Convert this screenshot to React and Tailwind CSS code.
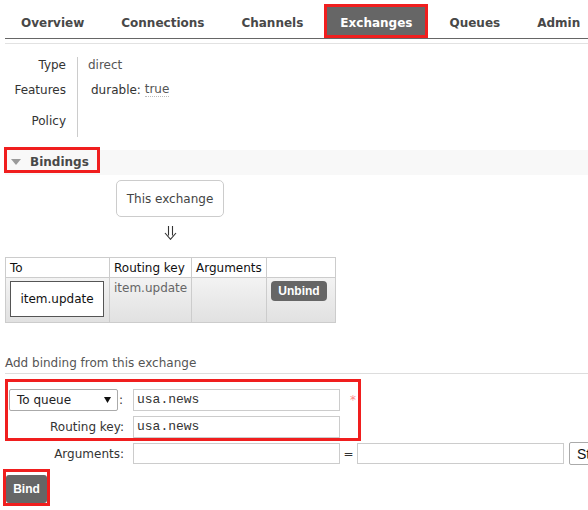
export default function App() {
  const tabs = ["Overview", "Connections", "Channels", "Exchanges", "Queues", "Admin"];
  return (
    <div className="w-[588px] h-[510px] overflow-hidden bg-white font-['DejaVu_Sans',Verdana,sans-serif] text-[12px] leading-[14px] text-[#484848]">
      {/* nav */}
      <div className="pt-[4px] pl-[5px]">
        <div className="flex gap-[5px] border-b border-[#666]">
          {tabs.map((t) =>
            t === "Exchanges" ? (
              <div
                key={t}
                className="h-[34px] shrink-0 flex items-center pt-[3px] px-[13px] border-[3px] border-[#f01e1e] bg-[#666] text-white font-bold"
              >
                {t}
              </div>
            ) : (
              <div key={t} className="h-[34px] shrink-0 flex items-center pt-[3px] px-4 font-bold text-[#484848]">
                {t}
              </div>
            )
          )}
        </div>
      </div>

      <div className="pl-[5px] mt-[4px]">
        <div className="border-t border-[#e2e2e2]">
          {/* details */}
          <div className="grid grid-cols-[61px_1fr] pt-[13px]">
            <div className="h-[15px] flex items-center justify-end text-[#333]">Type</div>
            <div className="h-[15px] ml-[11px] border-l border-[#ccc] pl-[10px] flex items-center text-[#555]">direct</div>
            <div className="h-[32px] pt-[4px] flex items-center justify-end text-[#333]">Features</div>
            <div className="h-[32px] pt-[4px] ml-[11px] border-l border-[#ccc] pl-[13px] flex items-center text-[#333]">
              durable:&nbsp;<span className="text-[#555] border-b border-dotted border-[#bbb] leading-[13px]">true</span>
            </div>
            <div className="h-[33px] pt-[1px] flex items-center justify-end text-[#333]">Policy</div>
            <div className="h-[33px] ml-[11px] border-l border-[#ccc]"></div>
          </div>

          {/* bindings header */}
          <div className="mt-[13px] h-[25px] bg-[#f8f8f8] flex items-start">
            <div className="-mt-[3px] -ml-[1px] h-[26px] w-[96px] border-[3px] border-[#f01e1e] flex items-center pt-[4px] pl-[4px]">
              <svg width="10" height="6" viewBox="0 0 10 6" className="shrink-0">
                <path d="M0 0 L10 0 L5 6 Z" fill="#9a9a9a" />
              </svg>
              <span className="ml-[9px] font-bold text-[#484848]">Bindings</span>
            </div>
          </div>

          {/* this exchange */}
          <div className="mt-[5px] ml-[111px] w-[108px] h-[37px] border border-[#ccc] rounded-[5px] flex items-center justify-center text-[#444]">
            This exchange
          </div>
          <div className="mt-[9px] ml-[111px] w-[108px] h-[14px] flex justify-center">
            <svg width="13" height="14" viewBox="0 0 13 14" fill="none" stroke="#333" strokeWidth="1.1">
              <path d="M4.5 0 V9.5 M8.5 0 V9.5 M1 7 L6.5 13.3 L12 7" />
            </svg>
          </div>

          {/* table */}
          <div className="mt-[17px] grid grid-cols-[104px_82px_75px_69px] w-[331px] border-r border-b border-[#ccc]">
            {["To", "Routing key", "Arguments", ""].map((h, i) => (
              <div key={i} className="h-[20px] border-t border-l border-[#ccc] pl-[4px] flex items-center text-[#111]">
                {h}
              </div>
            ))}
            <div className="h-[45px] border-t border-l border-[#ccc] bg-linear-to-b from-[#f3f3f3] to-[#e1e1e1] pt-[3px] pl-[4px]">
              <div className="w-[94px] h-[36px] border border-[#555] bg-white flex items-center justify-center text-[#111]">
                item.update
              </div>
            </div>
            <div className="h-[45px] border-t border-l border-[#ccc] bg-linear-to-b from-[#f3f3f3] to-[#e1e1e1] pt-[3px] pl-[4px] text-[#666]">
              item.update
            </div>
            <div className="h-[45px] border-t border-l border-[#ccc] bg-linear-to-b from-[#f3f3f3] to-[#e1e1e1]"></div>
            <div className="h-[45px] border-t border-l border-[#ccc] bg-linear-to-b from-[#f3f3f3] to-[#e1e1e1] pt-[3px] pl-[4px]">
              <div className="w-[56px] h-[20px] rounded-[4px] bg-[#666] text-white font-bold font-['Liberation_Sans',Arial,sans-serif] text-[12px] flex items-center justify-center">
                Unbind
              </div>
            </div>
          </div>

          {/* add binding */}
          <div className="mt-[33px] pb-[3px] border-b border-[#ddd] text-[#555]">Add binding from this exchange</div>

          <div className="mt-[5px] w-[356px] border-[3px] border-[#f01e1e] pt-[7px]">
            <div className="flex items-center h-[22px] w-max">
              <div className="w-[125px] shrink-0 flex items-center">
                <div className="ml-[1px] w-[109px] h-[22px] border border-[#aaa] rounded-[2px] bg-white flex items-center pl-[7px] pr-[6px] text-[#222]">
                  <span className="flex-1">To queue</span>
                  <svg width="7" height="6" viewBox="0 0 7 6">
                    <path d="M0 0 L7 0 L3.5 6 Z" fill="#111" />
                  </svg>
                </div>
                <span className="ml-[1px] text-[#333]">:</span>
              </div>
              <div className="w-[207px] h-[22px] shrink-0 border border-[#ccc] bg-white flex items-center pl-[3px] font-['Liberation_Mono',monospace] text-[13px] text-[#333]">
                usa.news
              </div>
              <span className="ml-[10px] self-start mt-[4px] text-[#f88]">*</span>
            </div>
            <div className="mt-[5px] flex items-center h-[22px] w-max">
              <div className="w-[125px] shrink-0 text-right pr-[9px] text-[#333]">Routing key:</div>
              <div className="w-[207px] h-[22px] shrink-0 border border-[#ccc] bg-white flex items-center pl-[3px] font-['Liberation_Mono',monospace] text-[13px] text-[#333]">
                usa.news
              </div>
            </div>
          </div>

          <div className="mt-[1px] flex items-center h-[23px] w-max">
            <div className="w-[128px] shrink-0 text-right pr-[9px] text-[#333]">Arguments:</div>
            <div className="w-[207px] h-[21px] shrink-0 border border-[#ccc] bg-white"></div>
            <div className="w-[17px] shrink-0 text-center text-[#333]">=</div>
            <div className="w-[207px] h-[21px] shrink-0 border border-[#ccc] bg-white"></div>
            <div className="ml-[5px] w-[70px] h-[23px] shrink-0 border border-[#aaa] rounded-[2px] bg-white flex items-center pl-[7px] font-['Liberation_Sans',Arial,sans-serif] text-[14px] text-[#111]">
              String
            </div>
          </div>

          <div className="mt-[4px] -ml-[2px] w-[47px] h-[37px] border-[3px] border-[#f01e1e] pt-[3px]">
            <div className="w-[41px] h-[28px] rounded-[3px] bg-[#666] text-white font-bold font-['Liberation_Sans',Arial,sans-serif] text-[12px] flex items-center justify-center">
              Bind
            </div>
          </div>
        </div>
      </div>
    </div>
  );
}
